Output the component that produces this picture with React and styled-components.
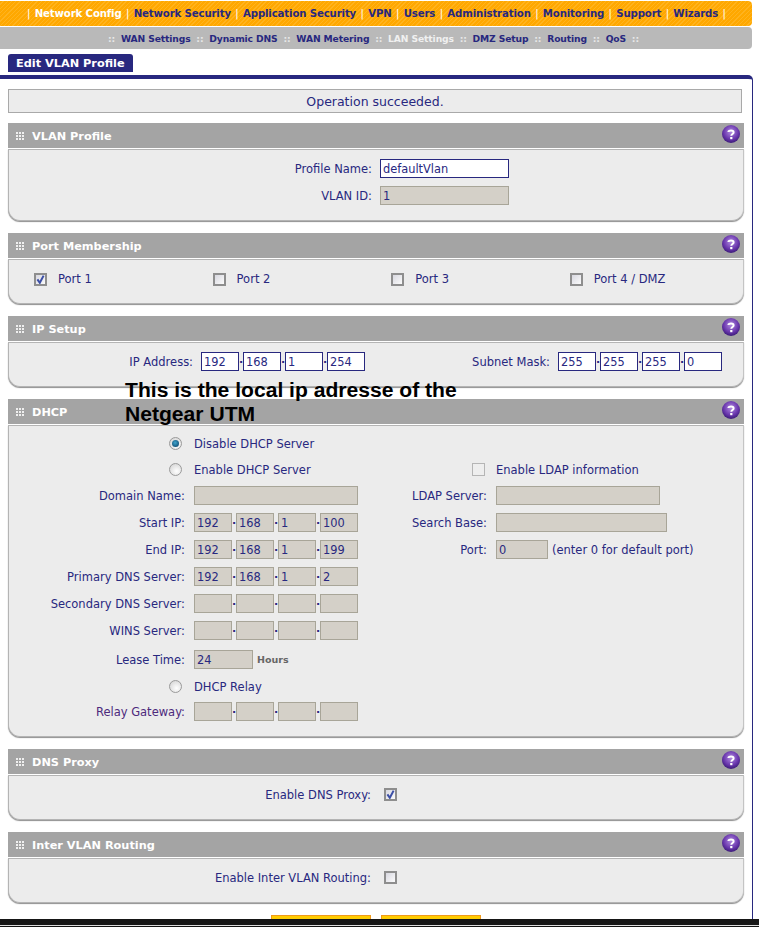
import React from 'react';
import styled, { createGlobalStyle } from 'styled-components';

const GlobalStyle = createGlobalStyle`
  html, body {
    margin: 0;
    padding: 0;
    background: #fff;
    overflow: hidden;
  }
  body {
    font-family: "DejaVu Sans", Verdana, sans-serif;
    font-size: 11.5px;
    color: #28287f;
  }
`;

const Page = styled.div`
  width: 759px;
  height: 927px;
  position: relative;
  overflow: hidden;
  padding-top: 1px;
  box-sizing: border-box;
`;

const TopNav = styled.div`
  width: 752px;
  height: 25px;
  box-sizing: border-box;
  padding-left: 27px;
  display: flex;
  align-items: center;
  gap: 4.4px;
  font-weight: bold;
  font-size: 10.2px;
  letter-spacing: -0.15px;
  border-radius: 0 4px 4px 0;
  background: repeating-linear-gradient(135deg, #ffa800 0 2px, #ffb31e 2px 3px);
`;

const NavLink = styled.span`
  color: ${({ $active }) => ($active ? '#fff' : '#28287f')};
  white-space: nowrap;
`;

const NavSep = styled.span`
  color: #fff;
  font-weight: normal;
`;

const SubNav = styled.div`
  width: 752px;
  height: 22px;
  margin-top: 1px;
  box-sizing: border-box;
  padding-left: 108px;
  display: flex;
  align-items: center;
  gap: 5.8px;
  font-weight: bold;
  font-size: 9.2px;
  letter-spacing: -0.12px;
  background: #b9b9b9;
  border-radius: 0 4px 4px 0;
`;

const SubLink = styled.span`
  color: ${({ $active }) => ($active ? '#f0f0f0' : '#28287f')};
  white-space: nowrap;
`;

const SubSep = styled.span`
  color: #e8e8e8;
`;

const TabRow = styled.div`
  height: 21px;
  margin-top: 5px;
  padding-left: 8px;
`;

const Tab = styled.div`
  display: inline-flex;
  align-items: center;
  width: 125px;
  height: 18px;
  box-sizing: border-box;
  padding-left: 8px;
  background: #28287f;
  color: #fff;
  font-weight: bold;
  font-size: 11.3px;
  border-radius: 3px 3px 0 0;
`;

const Content = styled.div`
  width: 753px;
  height: 844px;
  box-sizing: border-box;
  border-top: 4px solid #28287f;
  border-right: 1px solid #28287f;
  border-top-right-radius: 5px;
  padding: 10px 0 0 8px;
`;

const Message = styled.div`
  width: 734px;
  height: 24px;
  box-sizing: border-box;
  border: 1px solid #a9a9a9;
  background: #ececec;
  display: flex;
  align-items: center;
  justify-content: center;
  font-size: 12.5px;
  margin-bottom: 10px;
`;

const Panel = styled.section`
  width: 736px;
  margin-bottom: 12px;
`;

const PanelHead = styled.div`
  height: 25px;
  box-sizing: border-box;
  padding: 0 4px 0 8px;
  display: flex;
  align-items: center;
  gap: 8px;
  background: #a4a4a4;
  color: #fff;
  font-weight: bold;
  font-size: 11.3px;
`;

const PanelTitle = styled.span`
  flex: 1;
  padding-top: 1px;
`;

const HelpSlot = styled.span`
  align-self: flex-start;
  height: 18px;
  margin-top: 2px;
`;

const PanelBody = styled.div`
  height: ${({ $h }) => $h}px;
  margin-top: 1px;
  box-sizing: border-box;
  background: #ececec;
  border: 1px solid #b4b4b4;
  border-right-color: #c4c4c4;
  border-radius: 0 0 12px 12px;
  box-shadow: 0 1px 1px #8f8f8f;
`;

const Stack = styled.div`
  display: flex;
  flex-direction: column;
  gap: 8px;
  padding-top: 9px;
`;

const Row = styled.div`
  display: flex;
  align-items: center;
  height: 19px;
`;

const Label = styled.span`
  width: ${({ $w }) => $w}px;
  flex: none;
  box-sizing: border-box;
  padding-right: ${({ $gap }) => $gap ?? 8}px;
  text-align: right;
  white-space: nowrap;
  color: ${({ $plum }) => ($plum ? '#4d2a7c' : '#28287f')};
`;

const Field = styled.div`
  width: ${({ $w }) => $w}px;
  height: 19px;
  flex: none;
  box-sizing: border-box;
  padding: 1px 0 0 2px;
  display: flex;
  align-items: center;
  font-size: 11.4px;
  color: #28287f;
  background: ${({ $off }) => ($off ? '#d4d0c8' : '#fff')};
  border: 1px solid ${({ $off }) => ($off ? '#a8a598' : '#28287f')};
`;

const IpDot = styled.span`
  width: 4px;
  flex: none;
  font-size: 11px;
  font-weight: bold;
  line-height: 11px;
  text-align: center;
  margin-top: 2px;
`;

const IpGroup = styled.div`
  display: flex;
  align-items: center;
`;

const PortGrid = styled.div`
  display: grid;
  grid-template-columns: repeat(4, 178.6px);
  padding: 12px 0 0 25px;
`;

const PortItem = styled.label`
  display: flex;
  align-items: center;
  height: 14px;
  gap: 11px;
`;

const Box = styled.span`
  width: 13px;
  height: 13px;
  flex: none;
  box-sizing: border-box;
  display: inline-flex;
  align-items: center;
  justify-content: center;
  border: ${({ $faint }) => ($faint ? '1px solid #b5b5b5' : '2px solid #8e8e8e')};
  background: ${({ $faint }) => ($faint ? '#eee' : 'linear-gradient(135deg, #d8d8e0, #fbfbfb)')};
`;

const Radio = styled.span`
  width: 13px;
  height: 13px;
  flex: none;
  box-sizing: border-box;
  display: inline-flex;
  align-items: center;
  justify-content: center;
  border-radius: 50%;
  border: 1px solid #9a9a9a;
  background: radial-gradient(circle at 60% 65%, #fff, #cfcfcf);
`;

const RadioDot = styled.span`
  width: 7px;
  height: 7px;
  border-radius: 50%;
  background: radial-gradient(circle at 45% 40%, #3fa4cc, #06395f);
`;

const RadioWrap = styled.div`
  width: 185px;
  flex: none;
  display: flex;
  justify-content: flex-end;
  padding-right: 12px;
  box-sizing: border-box;
`;

const SetupRow = styled(Row)`
  margin-top: 9px;
`;

const DhcpGrid = styled.div`
  display: flex;
  padding-top: 8px;
`;

const DhcpColumn = styled.div`
  width: ${({ $w }) => $w}px;
  flex: none;
  padding-top: ${({ $top }) => $top ?? 0}px;
`;

const DhcpRow = styled(Row)`
  margin-bottom: ${({ $mb }) => $mb ?? 8}px;
  white-space: nowrap;
`;

const Hint = styled.span`
  margin-left: 4px;
  white-space: nowrap;
`;

const Hours = styled.span`
  margin-left: 4px;
  font-size: 9.5px;
  font-weight: bold;
  color: #666;
`;

const LdapCheck = styled.div`
  width: 129px;
  flex: none;
  display: flex;
  justify-content: flex-end;
  padding-right: 11px;
  box-sizing: border-box;
`;

const Buttons = styled.div`
  display: flex;
  gap: 10px;
  padding-left: 263px;
`;

const ActionButton = styled.div`
  width: 100px;
  height: 22px;
  box-sizing: border-box;
  background: #ffcc00;
  border: 1px solid #f09a1a;
`;

const TaskBar = styled.div`
  position: absolute;
  left: 0;
  right: 0;
  bottom: 0;
  height: 8px;
  box-sizing: border-box;
  background: #161616;
  border-bottom: 1px solid #111;
  box-shadow: inset 0 -1px 0 #ddd;
`;

const Annotation = styled.div`
  position: absolute;
  left: 125px;
  top: 378px;
  width: 360px;
  font-family: "Liberation Sans", Arial, sans-serif;
  font-weight: bold;
  font-size: 21.1px;
  line-height: 24px;
  color: #000;
`;

const Grip = () => (
  <svg width="8" height="8" viewBox="0 0 8 8" fill="#efefef">
    {[0, 3, 6].flatMap((y) =>
      [0, 3, 6].map((x) => <rect key={`${x}-${y}`} x={x} y={y} width="2" height="2" />),
    )}
  </svg>
);

const HelpIcon = ({ id }) => (
  <svg width="18" height="18" viewBox="0 0 18 18" style={{ display: 'block' }}>
    <defs>
      <radialGradient id={id} cx="0.5" cy="0.38" r="0.62">
        <stop offset="0" stopColor="#b18be0" />
        <stop offset="0.65" stopColor="#6a37ad" />
        <stop offset="1" stopColor="#3b1a78" />
      </radialGradient>
    </defs>
    <circle cx="9" cy="9" r="9" fill={`url(#${id})`} />
    <path
      d="M6.4 6.9 C6.4 5.2 11.6 4.8 11.6 7.4 C11.6 9 9.3 9.1 9.3 10.8"
      fill="none"
      stroke="#fff"
      strokeWidth="2"
    />
    <rect x="8.2" y="12" width="2.2" height="2.2" fill="#fff" />
  </svg>
);

const Check = ({ on, faint }) => (
  <Box $faint={faint}>
    {on && (
      <svg width="9" height="9" viewBox="0 0 9 9">
        <path d="M1.4 4.4 L3.8 7.8 L7.6 0.6" fill="none" stroke="#3c4fa6" strokeWidth="2" />
      </svg>
    )}
  </Box>
);

const Dhcp = ({ checked }) => <Radio>{checked && <RadioDot />}</Radio>;

const IpFields = ({ values = ['', '', '', ''], off, w = 38 }) => (
  <IpGroup>
    {values.map((v, i) => (
      <React.Fragment key={i}>
        {i > 0 && <IpDot>·</IpDot>}
        <Field $w={w} $off={off}>{v}</Field>
      </React.Fragment>
    ))}
  </IpGroup>
);

const Section = ({ title, id, h, children }) => (
  <Panel>
    <PanelHead>
      <Grip />
      <PanelTitle>{title}</PanelTitle>
      <HelpSlot>
        <HelpIcon id={id} />
      </HelpSlot>
    </PanelHead>
    <PanelBody $h={h}>{children}</PanelBody>
  </Panel>
);

const topLinks = ['Network Security', 'Application Security', 'VPN', 'Users', 'Administration', 'Monitoring', 'Support', 'Wizards'];
const subLinks = ['WAN Settings', 'Dynamic DNS', 'WAN Metering', 'LAN Settings', 'DMZ Setup', 'Routing', 'QoS'];
const ports = [
  { name: 'Port 1', on: true },
  { name: 'Port 2' },
  { name: 'Port 3' },
  { name: 'Port 4 / DMZ' },
];
const dhcpIps = [
  { label: 'Start IP:', values: ['192', '168', '1', '100'] },
  { label: 'End IP:', values: ['192', '168', '1', '199'] },
  { label: 'Primary DNS Server:', values: ['192', '168', '1', '2'] },
  { label: 'Secondary DNS Server:' },
  { label: 'WINS Server:', mb: 10 },
];

export default function App() {
  return (
    <Page>
      <GlobalStyle />
      <TopNav>
        <NavSep>|</NavSep>
        <NavLink $active>Network Config</NavLink>
        {topLinks.map((link) => (
          <React.Fragment key={link}>
            <NavSep>|</NavSep>
            <NavLink>{link}</NavLink>
          </React.Fragment>
        ))}
        <NavSep>|</NavSep>
      </TopNav>
      <SubNav>
        <SubSep>::</SubSep>
        {subLinks.map((link) => (
          <React.Fragment key={link}>
            <SubLink $active={link === 'LAN Settings'}>{link}</SubLink>
            <SubSep>::</SubSep>
          </React.Fragment>
        ))}
      </SubNav>
      <TabRow>
        <Tab>Edit VLAN Profile</Tab>
      </TabRow>
      <Content>
        <Message>Operation succeeded.</Message>

        <Section title="VLAN Profile" id="help-vlan" h={72}>
          <Stack>
            <Row>
              <Label $w={371}>Profile Name:</Label>
              <Field $w={129}>defaultVlan</Field>
            </Row>
            <Row>
              <Label $w={371}>VLAN ID:</Label>
              <Field $w={129} $off>1</Field>
            </Row>
          </Stack>
        </Section>

        <Section title="Port Membership" id="help-port" h={45}>
          <PortGrid>
            {ports.map((p) => (
              <PortItem key={p.name}>
                <Check on={p.on} />
                {p.name}
              </PortItem>
            ))}
          </PortGrid>
        </Section>

        <Section title="IP Setup" id="help-ip" h={45}>
          <SetupRow>
            <Label $w={192}>IP Address:</Label>
            <IpFields values={['192', '168', '1', '254']} />
            <Label $w={193}>Subnet Mask:</Label>
            <IpFields values={['255', '255', '255', '0']} />
          </SetupRow>
        </Section>

        <Section title="DHCP" id="help-dhcp" h={312}>
          <DhcpGrid>
            <DhcpColumn $w={358}>
              <DhcpRow $mb={7}>
                <RadioWrap><Dhcp checked /></RadioWrap>
                Disable DHCP Server
              </DhcpRow>
              <DhcpRow $mb={7}>
                <RadioWrap><Dhcp /></RadioWrap>
                Enable DHCP Server
              </DhcpRow>
              <DhcpRow>
                <Label $w={185} $gap={9}>Domain Name:</Label>
                <Field $w={164} $off />
              </DhcpRow>
              {dhcpIps.map((row) => (
                <DhcpRow key={row.label} $mb={row.mb}>
                  <Label $w={185} $gap={9}>{row.label}</Label>
                  <IpFields values={row.values} off />
                </DhcpRow>
              ))}
              <DhcpRow>
                <Label $w={185} $gap={9}>Lease Time:</Label>
                <Field $w={59} $off>24</Field>
                <Hours>Hours</Hours>
              </DhcpRow>
              <DhcpRow $mb={6}>
                <RadioWrap><Dhcp /></RadioWrap>
                DHCP Relay
              </DhcpRow>
              <DhcpRow>
                <Label $w={185} $gap={9} $plum>Relay Gateway:</Label>
                <IpFields off />
              </DhcpRow>
            </DhcpColumn>
            <DhcpColumn $w={370} $top={26}>
              <DhcpRow $mb={7}>
                <LdapCheck><Check faint /></LdapCheck>
                Enable LDAP information
              </DhcpRow>
              <DhcpRow>
                <Label $w={129} $gap={9}>LDAP Server:</Label>
                <Field $w={164} $off />
              </DhcpRow>
              <DhcpRow>
                <Label $w={129} $gap={9}>Search Base:</Label>
                <Field $w={171} $off />
              </DhcpRow>
              <DhcpRow>
                <Label $w={129} $gap={9}>Port:</Label>
                <Field $w={52} $off>0</Field>
                <Hint>(enter 0 for default port)</Hint>
              </DhcpRow>
            </DhcpColumn>
          </DhcpGrid>
        </Section>

        <Section title="DNS Proxy" id="help-dns" h={45}>
          <SetupRow>
            <Label $w={375} $gap={13}>Enable DNS Proxy:</Label>
            <Check on />
          </SetupRow>
        </Section>

        <Section title="Inter VLAN Routing" id="help-inter" h={45}>
          <SetupRow>
            <Label $w={375} $gap={13}>Enable Inter VLAN Routing:</Label>
            <Check />
          </SetupRow>
        </Section>

        <Buttons>
          <ActionButton />
          <ActionButton />
        </Buttons>
      </Content>
      <Annotation>
        This is the local ip adresse of the
        <br />
        Netgear UTM
      </Annotation>
      <TaskBar />
    </Page>
  );
}
